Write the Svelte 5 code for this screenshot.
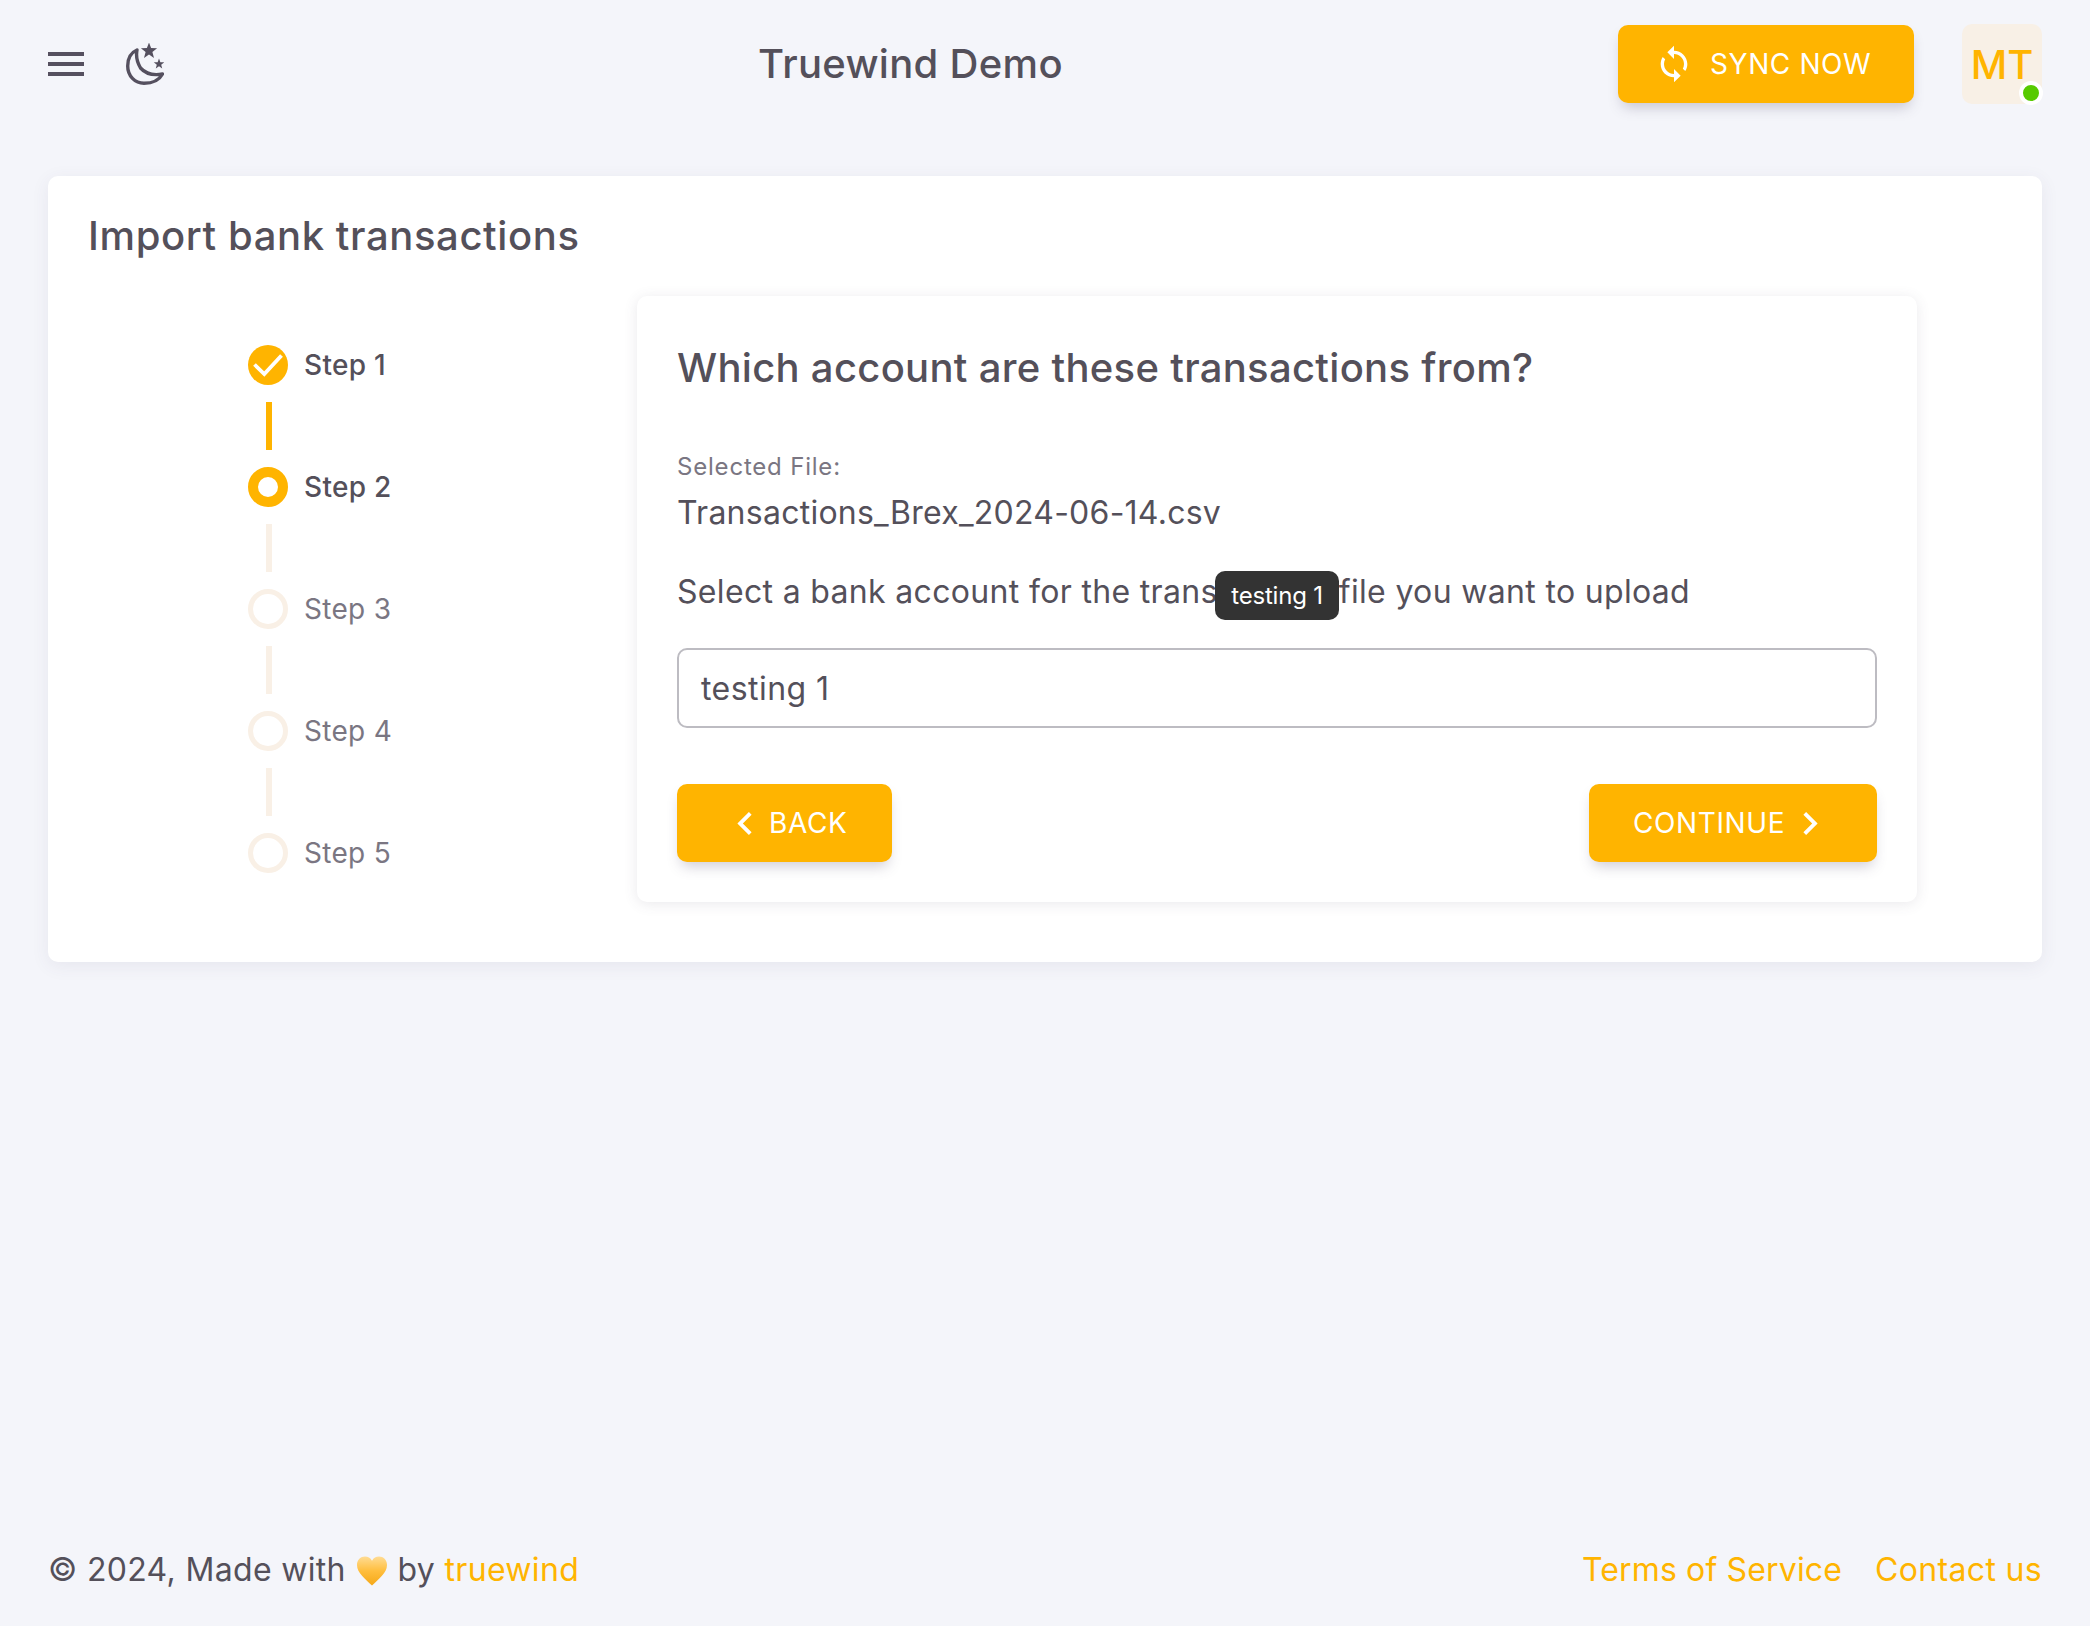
<script>
  const steps = [
    { label: "Step 1", state: "done" },
    { label: "Step 2", state: "current" },
    { label: "Step 3", state: "todo" },
    { label: "Step 4", state: "todo" },
    { label: "Step 5", state: "todo" },
  ];

  // five pointed star for the theme icon
  function star(cx, cy, r) {
    const pts = [];
    for (let i = 0; i < 10; i++) {
      const rad = i % 2 ? r * 0.42 : r;
      const a = (Math.PI / 5) * i - Math.PI / 2;
      pts.push(`${(cx + rad * Math.cos(a)).toFixed(2)},${(cy + rad * Math.sin(a)).toFixed(2)}`);
    }
    return pts.join(" ");
  }
</script>

<div class="page">
  <header class="topbar">
    <div class="left">
      <button class="icon-btn burger" aria-label="Menu">
        <svg width="36" height="24" viewBox="0 0 36 24"><path d="M0 0h36v4H0zM0 10h36v4H0zM0 20h36v4H0z" fill="#55505f" /></svg>
      </button>
      <button class="icon-btn moon" aria-label="Theme">
        <svg width="38" height="42" viewBox="0 0 38 42">
          <path d="M11 7C4 10 1.700 17 1.700 23 1.700 33 9 40.300 18 40.300 26 40.300 33 37.500 36.500 31 26 33 19 30 14.500 25 11 19 10 12 11 7z" fill="none" stroke="#55505f" stroke-width="3.400" stroke-linejoin="round" />
          <polygon points={star(23, 8, 8.500)} fill="#55505f" />
          <polygon points={star(33, 21, 5.500)} fill="#55505f" />
        </svg>
      </button>
    </div>
    <div class="title">Truewind Demo</div>
    <div class="right">
      <button class="btn sync">
        <svg width="40" height="40" viewBox="0 0 24 24"><path d="M12 4V1L8 5l4 4V6c3.310 0 6 2.690 6 6 0 1.010-.25 1.970-.7 2.800l1.460 1.460C19.540 15.030 20 13.570 20 12c0-4.420-3.580-8-8-8zm0 14c-3.310 0-6-2.690-6-6 0-1.010.25-1.970.7-2.800L5.240 7.740C4.460 8.970 4 10.430 4 12c0 4.420 3.580 8 8 8v3l4-4-4-4v3z" fill="#fff" /></svg>
        SYNC NOW
      </button>
      <div class="avatar">
        MT
        <span class="online"></span>
      </div>
    </div>
  </header>

  <main class="card">
    <h2>Import bank transactions</h2>
    <div class="wizard">
      <ul class="steps">
        {#each steps as s, i}
          <li class="step {s.state}">
            <span class="dot">
              {#if s.state === "done"}
                <svg width="40" height="40" viewBox="0 0 40 40" fill="none"><path d="M6.500 19.500l9.800 9.500L33.500 10.500" stroke="#fff" stroke-width="3.800" /></svg>
              {/if}
            </span>
            <span class="label">{s.label}</span>
          </li>
          {#if i < steps.length - 1}
            <li class="line" class:on={s.state === "done"}></li>
          {/if}
        {/each}
      </ul>

      <section class="panel">
        <h3>Which account are these transactions from?</h3>
        <div class="file-label">Selected File:</div>
        <div class="file-name">Transactions_Brex_2024-06-14.csv</div>
        <div class="prompt">
          Select a bank account for the transactions file you want to upload
          <span class="tooltip">testing 1</span>
        </div>
        <div class="select">testing 1</div>
        <div class="actions">
          <button class="btn back">
            <svg width="15" height="23" viewBox="8 6 7.410 12"><path d="M15.410 16.580L10.830 12l4.580-4.590L14 6l-6 6 6 6 1.410-1.420z" fill="#fff" /></svg>
            BACK
          </button>
          <button class="btn next">
            CONTINUE
            <svg width="15" height="23" viewBox="8.590 6 7.410 12"><path d="M8.590 16.580L13.170 12 8.590 7.410 10 6l6 6-6 6-1.410-1.420z" fill="#fff" /></svg>
          </button>
        </div>
      </section>
    </div>
  </main>

  <footer class="foot">
    <div>© 2024, Made with <svg class="heart" width="30" height="30" viewBox="0 0 32 32"><defs><linearGradient id="hg" x1="0" y1="0" x2="0" y2="1"><stop offset="0" stop-color="#ffdc94" /><stop offset="0.5" stop-color="#ffbe3d" /><stop offset="1" stop-color="#f5a818" /></linearGradient></defs><path d="M16 31.500C9 24.500 0 18 0 9.500 0 4 4 .5 8.500.5c3.200 0 5.800 1.500 7.500 4.500 1.700-3 4.300-4.500 7.500-4.500C28 .5 32 4 32 9.500c0 8.500-9 15-16 22z" fill="url(#hg)" /></svg> by <span class="link">truewind</span></div>
    <div class="foot-links"><span class="link terms">Terms of Service</span><span class="link">Contact us</span></div>
  </footer>
</div>

<style>
  :global(body) {
    margin: 0;
    background: #f4f5fa;
    font-family: Inter, "Liberation Sans", sans-serif;
    color: #54505a;
  }
  .page {
    height: 1626px;
    display: flex;
    flex-direction: column;
    padding: 0 48px;
    box-sizing: border-box;
  }
  .topbar {
    height: 128px;
    flex: none;
    display: grid;
    grid-template-columns: 1fr auto 1fr;
    align-items: center;
    position: relative;
  }
  .left {
    display: flex;
    align-items: center;
    gap: 42px;
  }
  .icon-btn {
    background: none;
    border: 0;
    padding: 0;
    display: flex;
  }
  .title {
    font-size: 40px;
    font-weight: 500;
    letter-spacing: 0.3px;
    position: absolute;
    left: 710px;
    top: 40px;
    line-height: 48px;
  }
  .right {
    grid-column: 3;
    display: flex;
    justify-content: flex-end;
    align-items: center;
    gap: 48px;
  }
  .btn {
    background: #ffb400;
    color: #fff;
    border: 0;
    border-radius: 10px;
    font-family: inherit;
    font-size: 28px;
    font-weight: 400;
    letter-spacing: 0.6px;
    height: 78px;
    padding: 0;
    display: flex;
    align-items: center;
    box-shadow: 0 8px 14px -4px rgba(80, 70, 100, 0.28);
  }
  .sync {
    width: 296px;
    padding-left: 36px;
    gap: 16px;
  }
  .avatar {
    width: 80px;
    height: 80px;
    border-radius: 10px;
    background: #f8f0e6;
    color: #ffb400;
    font-size: 40px;
    font-weight: 500;
    display: flex;
    align-items: center;
    justify-content: center;
    position: relative;
  }
  .online {
    position: absolute;
    right: -1px;
    bottom: -1px;
    width: 16px;
    height: 16px;
    background: #56ca00;
    border: 4px solid #fff;
    border-radius: 50%;
  }
  .card {
    background: #fff;
    border-radius: 10px;
    height: 786px;
    margin-top: 48px;
    padding: 40px;
    box-sizing: border-box;
    flex: none;
    box-shadow: 0 4px 18px rgba(80, 70, 100, 0.08);
  }
  h2 {
    margin: 0;
    font-size: 40px;
    font-weight: 500;
    line-height: 40px;
    letter-spacing: 0.6px;
  }
  .wizard {
    display: flex;
    margin-top: 40px;
  }
  .steps {
    list-style: none;
    margin: 0;
    padding: 49px 0 0 160px;
    width: 549px;
    box-sizing: border-box;
    flex: none;
  }
  .step {
    display: flex;
    align-items: center;
    gap: 16px;
    height: 40px;
  }
  .dot {
    width: 40px;
    height: 40px;
    border-radius: 50%;
    box-sizing: border-box;
    display: flex;
    align-items: center;
    justify-content: center;
    border: 5px solid #f9f0e6;
  }
  .done .dot {
    background: #ffb400;
    border: 0;
  }
  .current .dot {
    border: 10px solid #ffb400;
  }
  .label {
    font-size: 28px;
    color: #7a7682;
    letter-spacing: 0.3px;
  }
  .done .label,
  .current .label {
    color: #54505a;
    font-weight: 500;
  }
  .line {
    width: 6px;
    height: 48px;
    margin: 17px 0 17px 18px;
    background: #f9f0e6;
  }
  .line.on {
    background: #ffb400;
  }
  .panel {
    width: 1280px;
    height: 606px;
    box-sizing: border-box;
    padding: 44px 40px 40px;
    background: #fff;
    border-radius: 10px;
    box-shadow: 0 2px 14px rgba(80, 70, 100, 0.12);
  }
  h3 {
    margin: 0;
    font-size: 40px;
    font-weight: 500;
    line-height: 56px;
    letter-spacing: 0.3px;
  }
  .file-label {
    margin-top: 55px;
    font-size: 24px;
    line-height: 32px;
    color: #7a7682;
    letter-spacing: 0.8px;
  }
  .file-name {
    margin-top: 10px;
    font-size: 32px;
    line-height: 40px;
    letter-spacing: 0.25px;
  }
  .prompt {
    margin-top: 39px;
    font-size: 32px;
    line-height: 40px;
    letter-spacing: 0.33px;
    position: relative;
  }
  .tooltip {
    position: absolute;
    left: 538px;
    top: -1px;
    width: 124px;
    height: 49px;
    background: #333;
    color: #fff;
    border-radius: 10px;
    font-size: 24px;
    display: flex;
    align-items: center;
    justify-content: center;
    letter-spacing: -0.2px;
  }
  .select {
    margin-top: 36px;
    height: 80px;
    box-sizing: border-box;
    border: 2px solid #bdbcc2;
    border-radius: 10px;
    padding: 0 22px;
    display: flex;
    align-items: center;
    font-size: 32px;
    letter-spacing: 0.45px;
  }
  .actions {
    margin-top: 56px;
    display: flex;
    justify-content: space-between;
  }
  .back {
    width: 215px;
    padding-left: 60px;
    gap: 17px;
  }
  .next {
    width: 288px;
    padding-left: 44px;
    gap: 18px;
  }
  .foot {
    margin-top: auto;
    height: 76px;
    display: flex;
    justify-content: space-between;
    font-size: 32px;
    letter-spacing: 0.33px;
    line-height: 40px;
    flex: none;
  }
  .heart {
    vertical-align: -5px;
    margin: 0 1px 0 2px;
  }
  .foot-links {
    display: flex;
    gap: 33px;
  }
  .terms {
    letter-spacing: 0.15px;
  }
  .link {
    color: #ffb400;
  }
</style>
